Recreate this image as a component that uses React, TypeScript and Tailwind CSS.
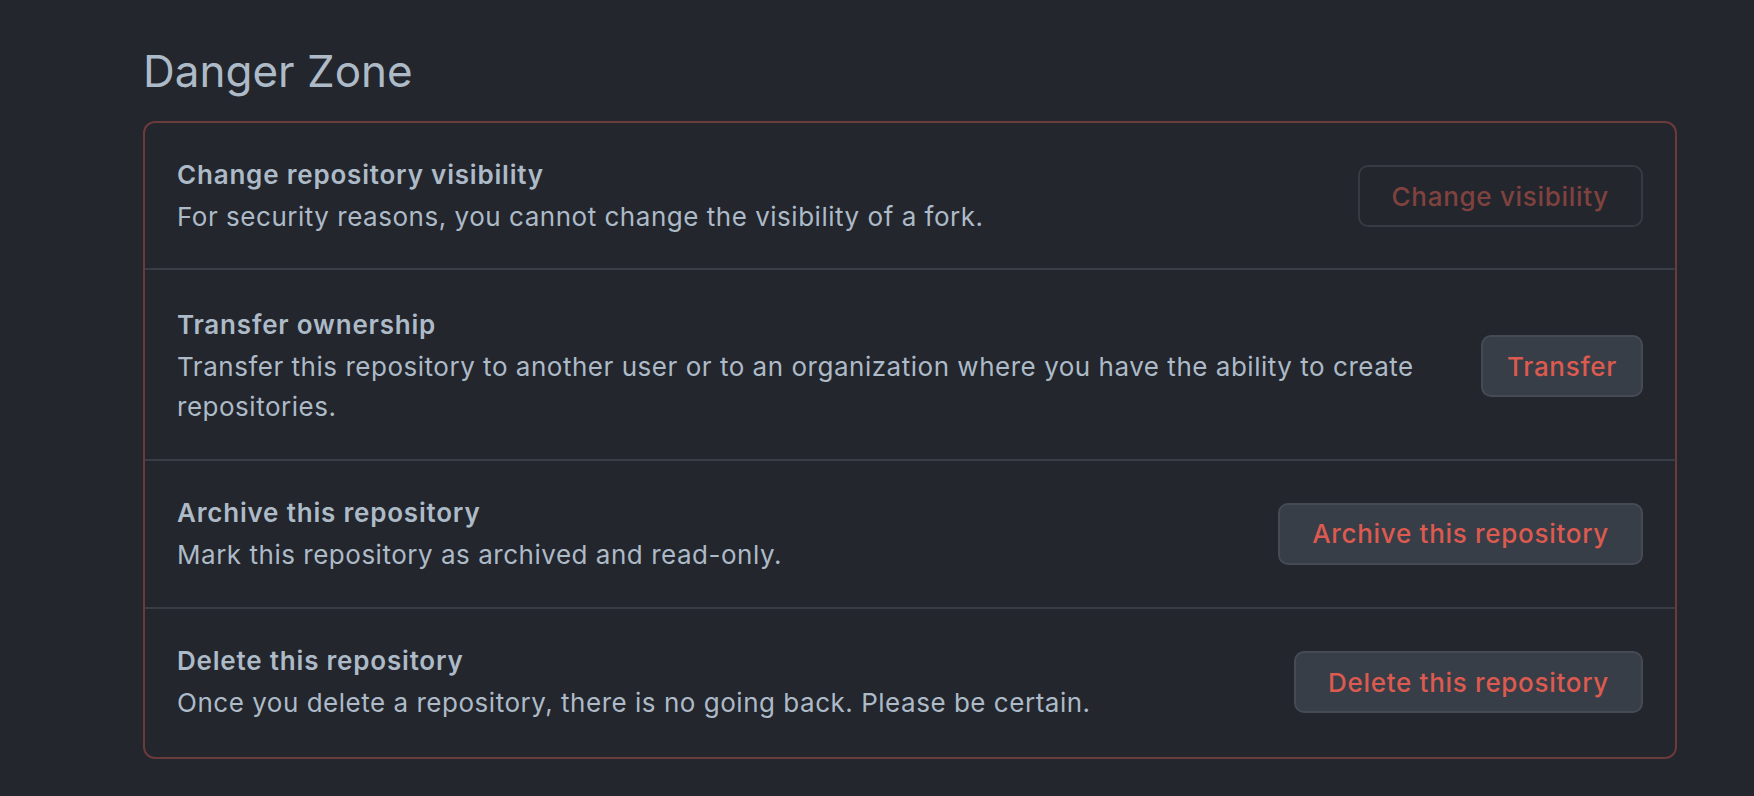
import React from "react";

const rows = [
  {
    title: "Change repository visibility",
    desc: "For security reasons, you cannot change the visibility of a fork.",
    button: "Change visibility",
    kind: "disabled",
    pad: "pt-[32px] pb-[30px]",
  },
  {
    title: "Transfer ownership",
    desc: "Transfer this repository to another user or to an organization where you have the ability to create repositories.",
    button: "Transfer",
    kind: "narrow",
    pad: "pt-[35px] pb-[31px]",
  },
  {
    title: "Archive this repository",
    desc: "Mark this repository as archived and read-only.",
    button: "Archive this repository",
    kind: "normal",
    pad: "py-[32px]",
  },
  {
    title: "Delete this repository",
    desc: "Once you delete a repository, there is no going back. Please be certain.",
    button: "Delete this repository",
    kind: "normal",
    pad: "pt-[32px] pb-[33px]",
  },
];

export default function App() {
  return (
    <div
      className="min-h-[796px] w-full bg-[#23262d] pl-[143px] pr-[77px] pt-[44px] text-[#adbac7]"
      style={{ fontFamily: "Inter, 'Noto Sans', sans-serif" }}
    >
      <h2 className="mb-[23px] text-[44px] font-normal leading-[54px] text-[#adbac7]">
        Danger Zone
      </h2>
      <div className="rounded-[12px] border-2 border-[#6b3a3a]">
        {rows.map((r, i) => (
          <div
            key={r.title}
            className={
              "flex items-center gap-[32px] px-[32px] " +
              r.pad +
              " " +
              (i > 0 ? "border-t-2 border-[#393e46]" : "")
            }
          >
            <div className="flex-1">
              <div className="text-[26px] font-semibold leading-[40px] tracking-[0.8px]">{r.title}</div>
              <div className="mt-[2px] text-[26px] leading-[40.5px] tracking-[0.52px]">{r.desc}</div>
            </div>
            {r.kind === "disabled" ? (
              <button className="h-[62px] shrink-0 rounded-[10px] border-2 border-[#363b43] bg-transparent px-[32px] text-[26px] font-medium tracking-[0.7px] text-[#80423f]">
                {r.button}
              </button>
            ) : (
              <button
                className={
                  "h-[62px] shrink-0 rounded-[10px] border-2 border-[#454b54] bg-[#383e47] text-[26px] font-medium tracking-[0.7px] text-[#dc5a4f] " +
                  (r.kind === "narrow" ? "px-[24px]" : "px-[32px]")
                }
              >
                {r.button}
              </button>
            )}
          </div>
        ))}
      </div>
    </div>
  );
}
